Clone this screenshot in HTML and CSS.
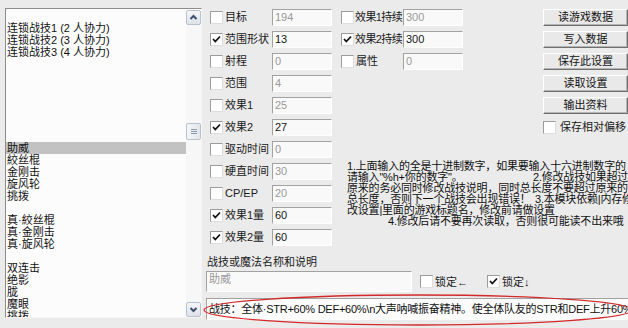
FILE: index.html
```html
<!DOCTYPE html>
<html lang="zh-CN">
<head>
<meta charset="utf-8">
<title>战技修改</title>
<link rel="stylesheet" href="styles.css">
</head>
<body>
<div class="win">
  <div class="listbox">
    <div class="items">
      <div class="item">连锁战技1 (2 人协力)</div>
      <div class="item">连锁战技2 (3 人协力)</div>
      <div class="item">连锁战技3 (4 人协力)</div>
      <div class="item"></div>
      <div class="item"></div>
      <div class="item"></div>
      <div class="item"></div>
      <div class="item"></div>
      <div class="item"></div>
      <div class="item"></div>
      <div class="item sel">助威</div>
      <div class="item">絞丝棍</div>
      <div class="item">金刚击</div>
      <div class="item">旋风轮</div>
      <div class="item">挑拨</div>
      <div class="item"></div>
      <div class="item">真·絞丝棍</div>
      <div class="item">真·金刚击</div>
      <div class="item">真·旋风轮</div>
      <div class="item"></div>
      <div class="item">双连击</div>
      <div class="item">绝影</div>
      <div class="item">胧</div>
      <div class="item">魔眼</div>
      <div class="item">挑拨</div>
    </div>
    <div class="vscroll">
      <div class="sbtn"><svg width="13" height="13" viewBox="0 0 13 13"><polyline points="3.5,8 6.5,5 9.5,8" fill="none" stroke="#3e4f6e" stroke-width="2"/></svg></div>
      <div class="track">
        <div class="thumb"><span class="grip"></span><span class="grip"></span><span class="grip"></span></div>
      </div>
      <div class="sbtn"><svg width="13" height="13" viewBox="0 0 13 13"><polyline points="3.5,5 6.5,8 9.5,5" fill="none" stroke="#3e4f6e" stroke-width="2"/></svg></div>
    </div>
  </div>

  <div class="panel">
    <div class="fields">
      <div class="col col1">
        <div class="row"><span class="chk"></span><span class="lbl">目标</span><span class="inp dis">194</span></div>
        <div class="row"><span class="chk on"><svg width="11" height="11" viewBox="0 0 11 11"><polyline points="2,5 4.3,7.5 9,2.5" fill="none" stroke="#111" stroke-width="1.8"/></svg></span><span class="lbl">范围形状</span><span class="inp">13</span></div>
        <div class="row"><span class="chk"></span><span class="lbl">射程</span><span class="inp dis">0</span></div>
        <div class="row"><span class="chk"></span><span class="lbl">范围</span><span class="inp dis">4</span></div>
        <div class="row"><span class="chk"></span><span class="lbl">效果1</span><span class="inp dis">25</span></div>
        <div class="row"><span class="chk on"><svg width="11" height="11" viewBox="0 0 11 11"><polyline points="2,5 4.3,7.5 9,2.5" fill="none" stroke="#111" stroke-width="1.8"/></svg></span><span class="lbl">效果2</span><span class="inp">27</span></div>
        <div class="row"><span class="chk"></span><span class="lbl">驱动时间</span><span class="inp dis">0</span></div>
        <div class="row"><span class="chk"></span><span class="lbl">硬直时间</span><span class="inp dis">30</span></div>
        <div class="row"><span class="chk"></span><span class="lbl">CP/EP</span><span class="inp dis">20</span></div>
        <div class="row"><span class="chk on"><svg width="11" height="11" viewBox="0 0 11 11"><polyline points="2,5 4.3,7.5 9,2.5" fill="none" stroke="#111" stroke-width="1.8"/></svg></span><span class="lbl">效果1量</span><span class="inp">60</span></div>
        <div class="row"><span class="chk on"><svg width="11" height="11" viewBox="0 0 11 11"><polyline points="2,5 4.3,7.5 9,2.5" fill="none" stroke="#111" stroke-width="1.8"/></svg></span><span class="lbl">效果2量</span><span class="inp">60</span></div>
      </div>

      <div class="col col2">
        <div class="row"><span class="chk"></span><span class="lbl tight">效果1持续</span><span class="inp dis">300</span></div>
        <div class="row"><span class="chk on"><svg width="11" height="11" viewBox="0 0 11 11"><polyline points="2,5 4.3,7.5 9,2.5" fill="none" stroke="#111" stroke-width="1.8"/></svg></span><span class="lbl tight">效果2持续</span><span class="inp">300</span></div>
        <div class="row"><span class="chk"></span><span class="lbl">属性</span><span class="inp dis">0</span></div>
      </div>

      <div class="col col3">
        <div class="row"><span class="btn">读游戏数据</span></div>
        <div class="row"><span class="btn">写入数据</span></div>
        <div class="row"><span class="btn">保存此设置</span></div>
        <div class="row"><span class="btn">读取设置</span></div>
        <div class="row"><span class="btn">输出资料</span></div>
        <div class="row"><span class="chk"></span><span class="lbl wide">保存相对偏移</span></div>
      </div>

      <div class="note">
        <div class="line">1.上面输入的全是十进制数字，如果要输入十六进制数字的</div>
        <div class="line"><span class="lead2">请输入"%h+你的数字"。</span><span>2.修改战技如果超过</span></div>
        <div class="line">原来的务必同时修改战技说明，同时总长度不要超过原来的</div>
        <div class="line"><span class="lead4">总长度，否则下一个战技会出现错误！</span><span>3.本模块依赖|内存修</span></div>
        <div class="line">改设置|里面的游戏标题名，修改前请做设置</div>
        <div class="line indent">4.修改后请不要再次读取，否则很可能读不出来哦</div>
      </div>
    </div>

    <div class="bottom">
      <div class="caption">战技或魔法名称和说明</div>
      <div class="namerow">
        <div class="namebox">助威</div>
        <div class="lock first"><span class="chk"></span><span class="lbl">锁定←</span></div>
        <div class="lock"><span class="chk on"><svg width="11" height="11" viewBox="0 0 11 11"><polyline points="2,5 4.3,7.5 9,2.5" fill="none" stroke="#111" stroke-width="1.8"/></svg></span><span class="lbl">锁定↓</span></div>
      </div>
      <div class="descbox">战技：全体·STR+60% DEF+60%\n大声呐喊振奋精神。使全体队友的STR和DEF上升60%</div>
    </div>
  </div>
</div>

<svg class="mark" width="628" height="328" viewBox="0 0 628 328">
  <ellipse cx="418" cy="310" rx="214" ry="15" fill="none" stroke="#d22a2a" stroke-width="1.3"/>
</svg>
</body>
</html>
```

FILE: styles.css
```css
* { box-sizing: border-box; }

html, body {
  margin: 0;
  padding: 0;
}

body {
  width: 628px;
  height: 328px;
  overflow: hidden;
  position: relative;
  background: #ebebeb;
  color: #151515;
  font-family: "Liberation Sans", "Noto Sans CJK SC", sans-serif;
  font-size: 11px;
  line-height: 12px;
}

.win {
  display: flex;
  align-items: flex-start;
  height: 328px;
  overflow: hidden;
  padding: 6px 0 0 5px;
}

/* ---------- list box ---------- */
.listbox {
  width: 197px;
  height: 310px;
  flex: none;
  margin-top: 2px;
  display: flex;
  background: #fcfcfc;
  border: 1px solid;
  border-color: #8c8c8c #f6f6f6 #f6f6f6 #8c8c8c;
  overflow: hidden;
}

.items {
  width: 180px;
  flex: none;
  padding-top: 13px;
  overflow: hidden;
}

.item {
  height: 12px;
  line-height: 12px;
  padding-left: 1px;
  white-space: nowrap;
  overflow: hidden;
  color: #111;
}

.item.sel {
  background: #c2c2c2;
}

.vscroll {
  width: 15px;
  flex: none;
  display: flex;
  flex-direction: column;
  padding-top: 1px;
}

.sbtn {
  width: 15px;
  height: 15px;
  flex: none;
  border: 1px solid #b9c1cd;
  border-radius: 2px;
  background: linear-gradient(#f4f6f9, #dde2ea);
  display: flex;
  align-items: center;
  justify-content: center;
}

.track {
  flex: 1;
  background: #f7f7f7;
}

.thumb {
  width: 15px;
  height: 17px;
  margin-top: 98px;
  border: 1px solid #b9c1cd;
  border-radius: 2px;
  background: linear-gradient(90deg, #f4f6f9, #e2e6ec);
  display: flex;
  flex-direction: column;
  align-items: center;
  justify-content: center;
  gap: 1px;
}

.grip {
  width: 6px;
  height: 1px;
  background: #8d99ad;
}

/* ---------- right panel ---------- */
.panel {
  flex: none;
  margin-left: 4px;
  display: flex;
  flex-direction: column;
}

.fields {
  display: grid;
  grid-template-columns: 131px 202px 85px;
  grid-template-rows: 154px 88px;
  padding-left: 4px;
}

.col {
  display: flex;
  flex-direction: column;
}

.col1 { grid-column: 1; grid-row: 1 / 3; }
.col2 { grid-column: 2; grid-row: 1; }
.col3 { grid-column: 3; grid-row: 1; }

.row {
  height: 22px;
  display: flex;
  align-items: center;
}

.chk {
  width: 13px;
  height: 13px;
  flex: none;
  background: #fff;
  border: 1px solid;
  border-color: #9c9c9c #dedede #dedede #9c9c9c;
  display: flex;
  align-items: center;
  justify-content: center;
}

.lbl {
  width: 47px;
  flex: none;
  margin-left: 2px;
  white-space: nowrap;
  color: #1a1a1a;
}

.lbl.tight {
  margin-left: 1px;
  width: 48px;
  letter-spacing: -0.6px;
}

.lbl.wide {
  width: auto;
  margin-left: 4px;
}

.inp {
  width: 60px;
  height: 17px;
  flex: none;
  padding-left: 2px;
  line-height: 15px;
  background: #f9f9f9;
  border: 1px solid;
  border-color: #a2a2a2 #ffffff #ffffff #a2a2a2;
  color: #151515;
}

.inp.dis { color: #999; }

.btn {
  width: 85px;
  height: 17px;
  line-height: 15px;
  text-align: center;
  background: #e9e9e9;
  border: 1px solid;
  border-color: #ffffff #707070 #707070 #ffffff;
  box-shadow: inset -1px -1px 0 #b4b4b4;
  color: #151515;
}

.note {
  grid-column: 2 / 4;
  grid-row: 2;
  padding: 1px 0 0 6px;
  color: #111;
}

.line {
  height: 11px;
  line-height: 11px;
  white-space: pre;
  letter-spacing: -0.2px;
}

.lead2, .lead4 {
  display: inline-block;
  width: 186px;
  height: 11px;
  vertical-align: top;
}

.lead4 { width: 188px; }

.indent { padding-left: 41px; }

/* ---------- bottom ---------- */
.bottom {
  margin-top: 8px;
  display: flex;
  flex-direction: column;
}

.caption {
  height: 12px;
  padding-left: 1px;
  color: #1a1a1a;
}

.namerow {
  margin-top: 3px;
  display: flex;
  align-items: center;
}

.namebox {
  width: 206px;
  height: 21px;
  flex: none;
  padding: 1px 2px;
  background: #f9f9f9;
  border: 1px solid;
  border-color: #a2a2a2 #ffffff #ffffff #a2a2a2;
  color: #9a9a9a;
}

.lock {
  display: flex;
  align-items: center;
  flex: none;
}

.lock.first {
  width: 67px;
  margin-left: 8px;
}

.lock .lbl { width: auto; margin-left: 2px; }

.descbox {
  margin-top: 6px;
  width: 430px;
  height: 22px;
  padding-left: 2px;
  line-height: 20px;
  white-space: nowrap;
  overflow: hidden;
  letter-spacing: -0.25px;
  background: #fcfcfc;
  border: 1px solid;
  border-color: #a2a2a2 #ffffff #ffffff #a2a2a2;
  color: #111;
}

/* ---------- annotation ---------- */
.mark {
  position: absolute;
  left: 0;
  top: 0;
  pointer-events: none;
}
```
